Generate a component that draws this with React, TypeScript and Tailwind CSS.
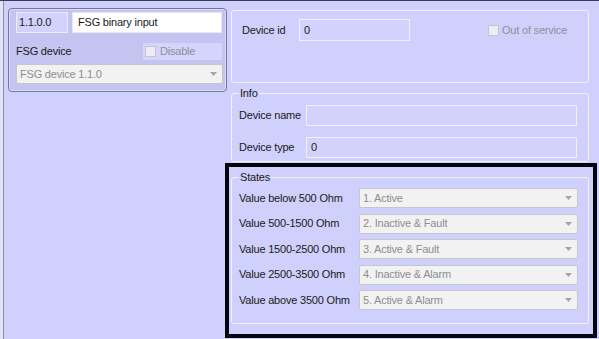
import React from "react";

function Arrow() {
  return (
    <svg width="7" height="4" viewBox="0 0 7 4" className="shrink-0">
      <path d="M0 0h7L3.5 4z" fill="#a4a4a8" />
    </svg>
  );
}

function Combo({ text, className }: { text: string; className: string }) {
  return (
    <div
      className={`flex items-center h-[20px] border border-[#c6c6cc] rounded-[2px] bg-[#f2f2f2] pl-[3px] pr-[5px] text-[#8e8e8e] ${className}`}
    >
      <span className="flex-1 whitespace-nowrap overflow-hidden">{text}</span>
      <Arrow />
    </div>
  );
}

function CheckBox() {
  return <div className="w-[11px] h-[11px] border border-[#c4c4cc] bg-[#ececf2] shrink-0" />;
}

const states: [string, string][] = [
  ["Value below 500 Ohm", "1. Active"],
  ["Value 500-1500 Ohm", "2. Inactive & Fault"],
  ["Value 1500-2500 Ohm", "3. Active & Fault"],
  ["Value 2500-3500 Ohm", "4. Inactive & Alarm"],
  ["Value above 3500 Ohm", "5. Active & Alarm"],
];

export default function App() {
  return (
    <div className="relative w-[599px] h-[339px] overflow-hidden bg-[#d0d0fc] border-t border-[#3c3c58] flex font-['Liberation_Sans',Arial,sans-serif] text-[11px] leading-[13px] tracking-[-0.2px] text-[#1a1a1a]">
      <div className="w-[3px] bg-[#e2e2fa] shrink-0" />
      <div className="flex-1 flex border-l border-[#8e8e9e]">
        {/* Left column */}
        <div className="w-[224px] shrink-0">
          <div className="ml-[4px] mt-[7px] w-[219px] h-[84px] rounded-[4px] border border-[#74749e] bg-[#c4c4f0] shadow-[inset_0_0_0_1px_#dcdcfa] pl-[7px] pt-[3px]">
            <div className="flex gap-[4px] h-[21px]">
              <div className="w-[52px] h-full border border-[#ececff] bg-[#d2d2fc] flex items-center pl-[2px]">
                1.1.0.0
              </div>
              <div className="w-[150px] h-full border border-[#e6e6f6] bg-white flex items-center pl-[5px]">
                FSG binary input
              </div>
            </div>
            <div className="flex items-center mt-[10px] h-[17px]">
              <span className="w-[127px]">FSG device</span>
              <div className="w-[79px] h-full bg-[#d4d4fc] flex items-center pl-[2px] gap-[4px] text-[#8e8e9a]">
                <CheckBox />
                <span>Disable</span>
              </div>
            </div>
            <Combo text="FSG device 1.1.0" className="w-[207px] mt-[4px]" />
          </div>
        </div>

        {/* Right column */}
        <div className="ml-[3px] w-[358px] shrink-0 flex flex-col">
          <fieldset className="mt-[9px] h-[73px] border border-[#f2f2ff] rounded-[3px] pl-[10px] pt-[8px]">
            <div className="flex items-center">
              <span className="w-[57px]">Device id</span>
              <div className="w-[111px] h-[22px] border border-[#f0f0ff] bg-[#d2d2fc] flex items-center pl-[4px]">
                0
              </div>
              <div className="ml-[78px] flex items-center gap-[3px] text-[#8e8e9a]">
                <CheckBox />
                <span>Out of service</span>
              </div>
            </div>
          </fieldset>

          <fieldset className="mt-[4px] border border-[#f2f2ff] rounded-[3px] pl-[7px] pb-[3px]">
            <legend className="px-[1px]">Info</legend>
            <div className="flex flex-col gap-[11px] pt-[5px]">
              <div className="flex items-center">
                <span className="w-[67px]">Device name</span>
                <div className="w-[271px] h-[21px] border border-[#f0f0ff] bg-[#d2d2fc]" />
              </div>
              <div className="flex items-center">
                <span className="w-[67px]">Device type</span>
                <div className="w-[271px] h-[21px] border border-[#f0f0ff] bg-[#d2d2fc] flex items-center pl-[4px]">
                  0
                </div>
              </div>
            </div>
          </fieldset>

          <fieldset className="mt-[9px] border border-[#f2f2ff] rounded-[3px] pl-[7px] pb-[13px]">
            <legend className="px-[1px]">States</legend>
            <div className="flex flex-col gap-[5.5px] pt-[4px]">
              {states.map(([label, value]) => (
                <div key={label} className="flex items-center">
                  <span className="w-[120px] whitespace-nowrap">{label}</span>
                  <Combo text={value} className="w-[219px]" />
                </div>
              ))}
            </div>
          </fieldset>
        </div>
      </div>

      {/* highlight frame */}
      <div className="absolute left-[225px] top-[162px] w-[372px] h-[175px] border-[4px] border-[#050510]" />
    </div>
  );
}
